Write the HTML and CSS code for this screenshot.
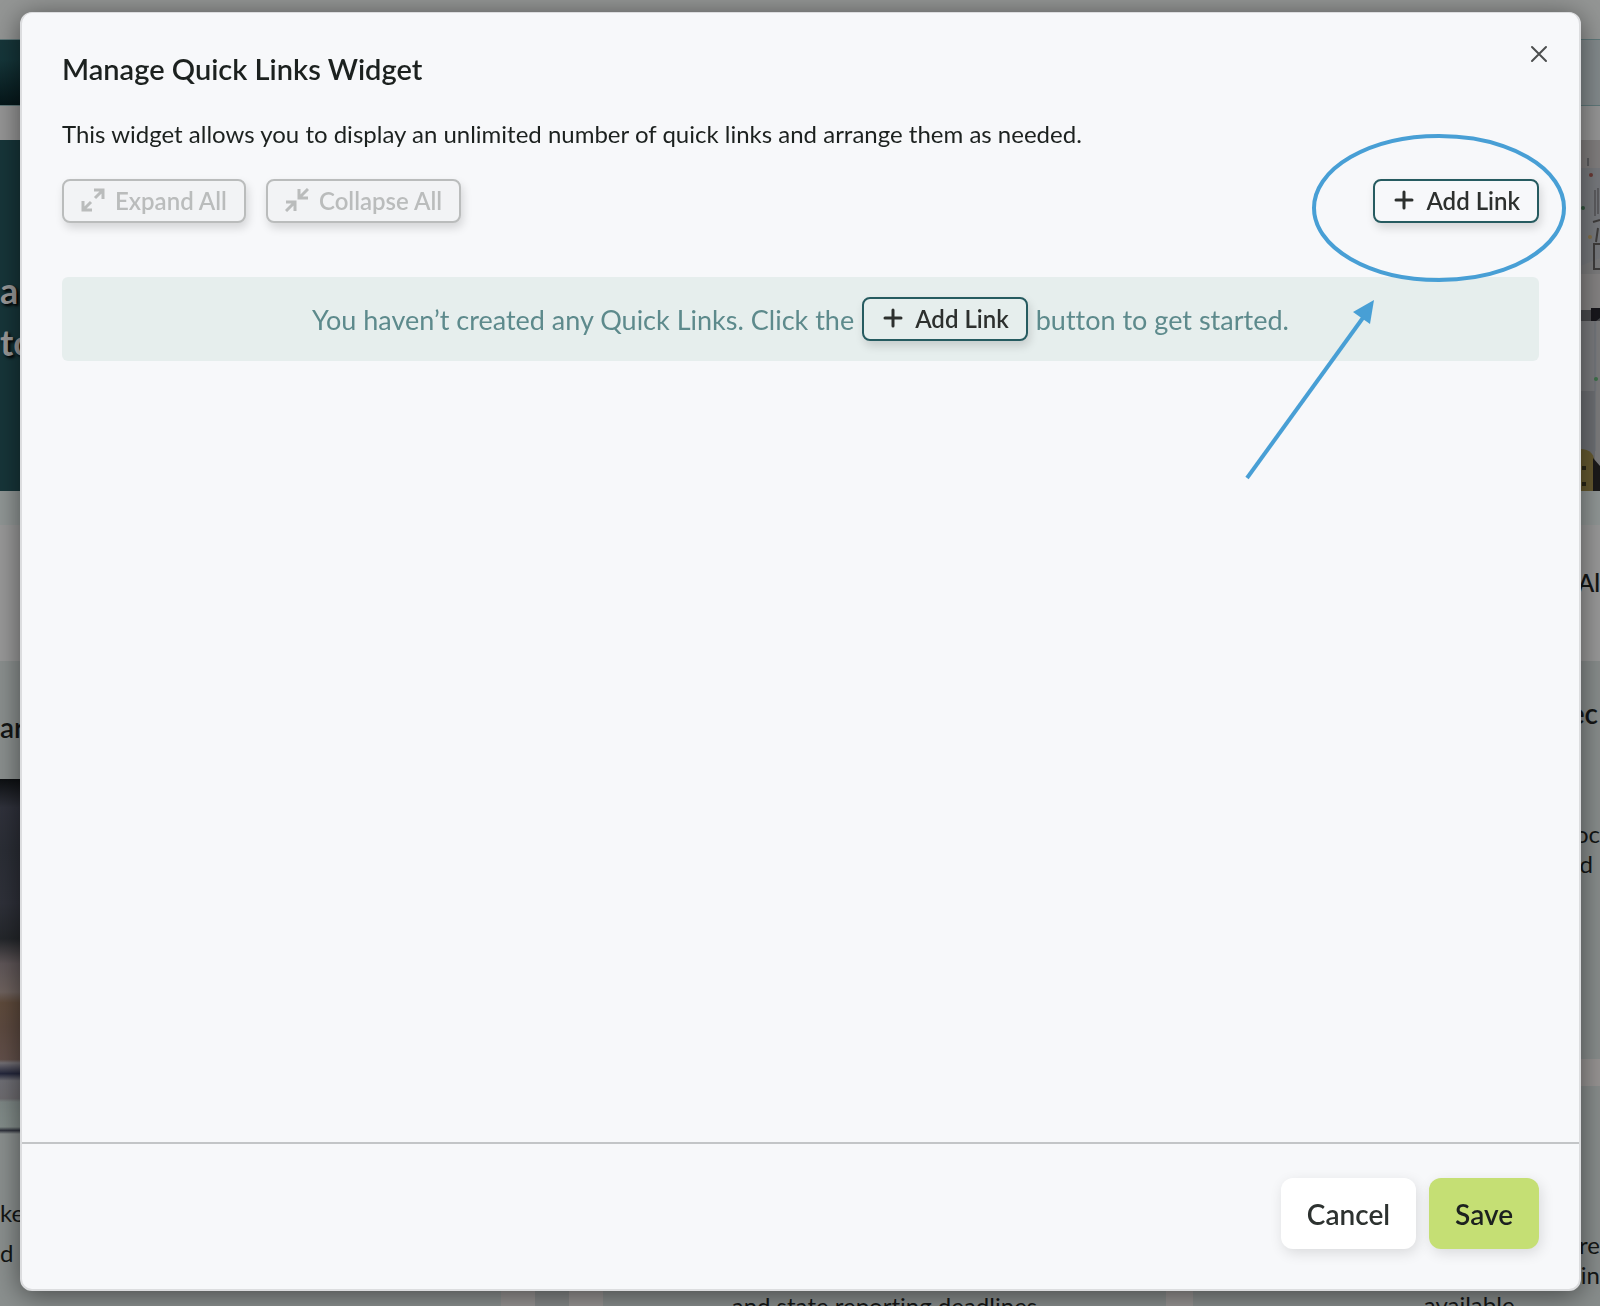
FILE: index.html
```html
<!DOCTYPE html>
<html lang="en">
<head>
  <meta charset="UTF-8" />
  <meta name="viewport" content="width=device-width, initial-scale=1.0"/>
  <title>Manage Quick Links Widget</title>
  <link rel="stylesheet" href="styles.css">
</head>
<body>

<!-- page behind the modal -->
<div class="page" aria-hidden="true">
  <div class="topbar"></div>
  <div class="nav"><div class="nav-logo"></div></div>
  <div class="nav-gap"></div>
  <div class="hero">
    <div class="hero-text">a<br>to</div>
    <svg class="hero-photo" viewBox="0 0 20 351" preserveAspectRatio="none">
      <rect width="20" height="351" fill="#7c7c7d"/>
      <rect width="20" height="30" fill="#817e7e"/>
      <path d="M0 28h20v90l-20 8z" fill="#77797d"/>
      <circle cx="11" cy="35" r="2" fill="#6b3a35"/>
      <circle cx="3" cy="68" r="2" fill="#33563f"/>
      <circle cx="10" cy="97" r="2" fill="#85714a"/>
      <path d="M8 18v8M15 50v26M18 48v26" stroke="#5c5c5f" stroke-width="2" fill="none"/>
      <path d="M13 82l7-2M14 130V104h6M14 129h6M16 102l2-14" stroke="#3f3d3c" stroke-width="2" fill="none"/>
      <path d="M0 134h20v36h-20z" fill="#858383"/>
      <path d="M0 170h20v11h-20z" fill="#4a4b4e"/>
      <path d="M11 168h9v10l-9 7z" fill="#18171c"/>
      <path d="M0 181h17v70h-17z" fill="#7a7b7e"/>
      <path d="M0 251h15v100h-15z" fill="#6d6f73"/>
      <path d="M15 181v130" stroke="#6c7278" stroke-width="1"/>
      <circle cx="16" cy="239" r="2" fill="#3d7049"/>
      <path d="M0 309c10 0 15 5 15 17v25h-15z" fill="#665a30"/>
      <path d="M4 326v25" stroke="#292616" stroke-width="4" stroke-dasharray="4 12"/>
      <path d="M13 318l7 8v25h-7z" fill="#1b1a1a"/>
    </svg>
  </div>
  <div class="hero-gap"></div>
  <div class="heading-row">Al</div>
  <div class="columns">
    <div class="side">
      <h2>ar</h2>
      <div class="side-photo"></div>
      <p>ke<br>d</p>
    </div>
    <div class="divider"></div>
    <div class="cards">
      <div class="card"></div>
      <div class="card card-right">
        <h2>ec</h2>
        <p>oc<br><span class="line-end">d</span></p>
      </div>
      <div class="card"><p class="centered">and state reporting deadlines</p></div>
      <div class="card card-right">
        <p class="edge">re<br>in</p>
        <p class="centered">available</p>
      </div>
    </div>
  </div>
</div>

<div class="overlay">
  <div class="modal" role="dialog" aria-labelledby="modalTitle">
    <button class="close" aria-label="Close">
      <svg width="18" height="18" viewBox="0 0 18 18"><path d="M2 2l14 14M16 2L2 16"/></svg>
    </button>

    <div class="modal-body">
      <h1 id="modalTitle">Manage Quick Links Widget</h1>
      <p class="description">This widget allows you to display an unlimited number of quick links and arrange them as needed.</p>

      <div class="toolbar">
        <button class="btn" disabled>
          <svg class="icon" viewBox="0 0 24 24"><path d="M14 10l8-8M13 2h9v9M10 14l-8 8M2 13v9h9"/></svg>
          Expand All
        </button>
        <button class="btn" disabled>
          <svg class="icon" viewBox="0 0 24 24"><path d="M23 1l-8 8M14 1v9h9M1 23l8-8M1 14h9v9"/></svg>
          Collapse All
        </button>
        <div class="callout">
          <button class="btn">
            <svg class="icon plus" viewBox="0 0 24 24"><path d="M12 4v16M4 12h16"/></svg>
            Add Link
          </button>
          <svg class="marker" width="254" height="350" viewBox="0 0 254 350">
            <ellipse cx="127" cy="75" rx="125" ry="72" />
            <path d="M-65 345L53 182" />
            <path class="head" d="M62 167L58 191L41 179Z" />
          </svg>
        </div>
      </div>

      <div class="empty">
        <span>You haven’t created any Quick Links. Click the</span>
        <button class="btn">
          <svg class="icon plus" viewBox="0 0 24 24"><path d="M12 4v16M4 12h16"/></svg>
          Add Link
        </button>
        <span>button to get started.</span>
      </div>
    </div>

    <div class="modal-footer">
      <button class="action">Cancel</button>
      <button class="action save">Save</button>
    </div>
  </div>
</div>

</body>
</html>
```

FILE: styles.css
```css
* {
  box-sizing: border-box;
}

body {
  margin: 0;
  height: 100vh;
  overflow: hidden;
  font-family: Lato, "Liberation Sans", sans-serif;
  font-variant-ligatures: none;
  color: #1c211f;
  background: #949695;
}

h1, h2, p {
  margin: 0;
}

button {
  font-family: inherit;
  cursor: pointer;
}

/* page behind the modal */
.page {
  height: 100vh;
  overflow: hidden;
  display: flex;
  flex-direction: column;
  color: #141615;
}

.page > div {
  flex-shrink: 0;
}

.topbar {
  height: 39px;
}

.nav {
  height: 67px;
  background: #838a8c;
  border-top: 1px solid #5f787a;
  border-bottom: 1px solid #5f787a;
}

.nav-logo {
  width: 400px;
  height: 100%;
  background: linear-gradient(#17363a, #15363a 30%, #06171a);
}

.nav-gap {
  height: 34px;
  background: #969696;
}

.hero {
  height: 351px;
  display: flex;
  justify-content: space-between;
  background: #17363a;
}

.hero-text {
  padding-top: 124px;
  font-size: 36px;
  line-height: 52px;
  font-weight: 700;
  color: #999;
  text-shadow: 2px 2px 3px #000;
}

.hero-photo {
  width: 20px;
  height: 100%;
}

.hero-gap {
  height: 34px;
  background: #919796;
}

.heading-row {
  height: 136px;
  background: #999;
  text-align: right;
  font-size: 24px;
  line-height: 116px;
  font-weight: 600;
}

.page > .columns {
  flex: 1 0 0;
  min-height: 0;
  display: flex;
  background: #979493;
}

.columns h2 {
  font-size: 28px;
  line-height: 36px;
  font-weight: 600;
}

.columns p {
  font-size: 24px;
  line-height: 30px;
}

.side {
  flex: 501;
  background: #8b908f;
}

.side h2 {
  padding: 48px 0 34px;
}

.side-photo {
  height: 355px;
  background: linear-gradient(#0d1012, #30323c 8%, #2b2e36 20%, #2f313a 35%, #24272b 45%, #5f5658 52%, #6e625e 60%, #5f4b3c 63%, #5d4a40 70%, #62504a 79%, #737075 80%, #24273c 83%, #6f6f75 85%, #6d6b6f 90%, #7d8785 91%, #838d8a 98%, #30333d 99%, #8b908f);
}

.side p {
  padding-top: 59px;
  line-height: 40px;
}

.divider {
  flex: 34;
  margin: 0 34px;
  background: #858888;
}

.cards {
  flex: 998;
  display: grid;
  grid-template-columns: 564fr 407fr;
  grid-template-rows: 398px 1fr;
  gap: 27px;
}

.card {
  background: #888d8c;
  overflow: hidden;
}

.card-right {
  text-align: right;
}

.card-right h2 {
  padding: 34px 2px 88px 0;
}

.line-end {
  padding-right: 7px;
}

.columns .centered {
  text-align: center;
}

.card > .centered:first-child {
  padding-top: 205px;
}

.edge {
  padding-top: 144px;
}

.card .edge + .centered {
  text-indent: 145px;
}

/* modal */
.overlay {
  position: fixed;
  inset: 0;
  padding: 12px 19px 15px 20px;
  display: flex;
}

.modal {
  position: relative;
  flex: 1;
  display: flex;
  flex-direction: column;
  background: #f7f8fa;
  border: 2px solid #dcdddf;
  border-top-width: 1px;
  border-radius: 12px;
  box-shadow: 0 4px 28px rgba(0, 0, 0, 0.5);
}

.close {
  position: absolute;
  top: 32px;
  right: 31px;
  padding: 0;
  border: 0;
  background: none;
  line-height: 0;
}

.close path {
  fill: none;
  stroke: #4d4f4f;
  stroke-width: 2;
  stroke-linecap: round;
}

.modal-body {
  flex: 1;
  padding: 38px 40px 0;
}

h1 {
  font-size: 29px;
  line-height: 36px;
  font-weight: 600;
}

.description {
  margin-top: 32px;
  font-size: 24px;
  line-height: 30px;
}

.toolbar {
  display: flex;
  gap: 20px;
  margin-top: 30px;
}

.btn {
  display: inline-flex;
  align-items: center;
  gap: 10px;
  height: 44px;
  padding: 0 17px 2px;
  border: 2px solid #265b60;
  border-radius: 8px;
  background: transparent;
  box-shadow: 2px 5px 10px rgba(0, 0, 0, 0.14);
  color: #2d302e;
  font-size: 24px;
  font-weight: 600;
  white-space: nowrap;
}

.toolbar .btn {
  background: #f7f8fa;
}

.empty .btn {
  background: #e6eeed;
}

.toolbar .btn:disabled {
  background: #f2f3f5;
  border-color: #babcbc;
  color: #babcbc;
}

.icon {
  width: 24px;
  height: 24px;
  fill: none;
  stroke: currentColor;
  stroke-width: 3;
}

.plus {
  stroke-linecap: round;
}

.callout {
  position: relative;
  margin-left: auto;
}

/* hand-drawn pointer around the Add Link button */
.marker {
  position: absolute;
  top: -46px;
  right: -27px;
  overflow: visible;
  pointer-events: none;
  fill: none;
  stroke: #489fd5;
  stroke-width: 4;
}

.marker .head {
  fill: #489fd5;
  stroke: none;
}

.empty {
  display: flex;
  align-items: center;
  justify-content: center;
  gap: 8px;
  height: 84px;
  margin-top: 54px;
  border-radius: 6px;
  background: #e6eeed;
  color: #5d8a8c;
  font-size: 27px;
}

.modal-footer {
  display: flex;
  justify-content: flex-end;
  gap: 13px;
  padding: 34px 40px 40px;
  border-top: 2px solid #c3c5c7;
}

.action {
  height: 71px;
  padding: 0 26px;
  border: 0;
  border-radius: 12px;
  background: #fff;
  box-shadow: 2px 4px 14px rgba(0, 0, 0, 0.12);
  color: #2d3230;
  font-size: 28px;
  font-weight: 600;
}

.save {
  background: #c5df74;
  color: #1c211f;
}
```
